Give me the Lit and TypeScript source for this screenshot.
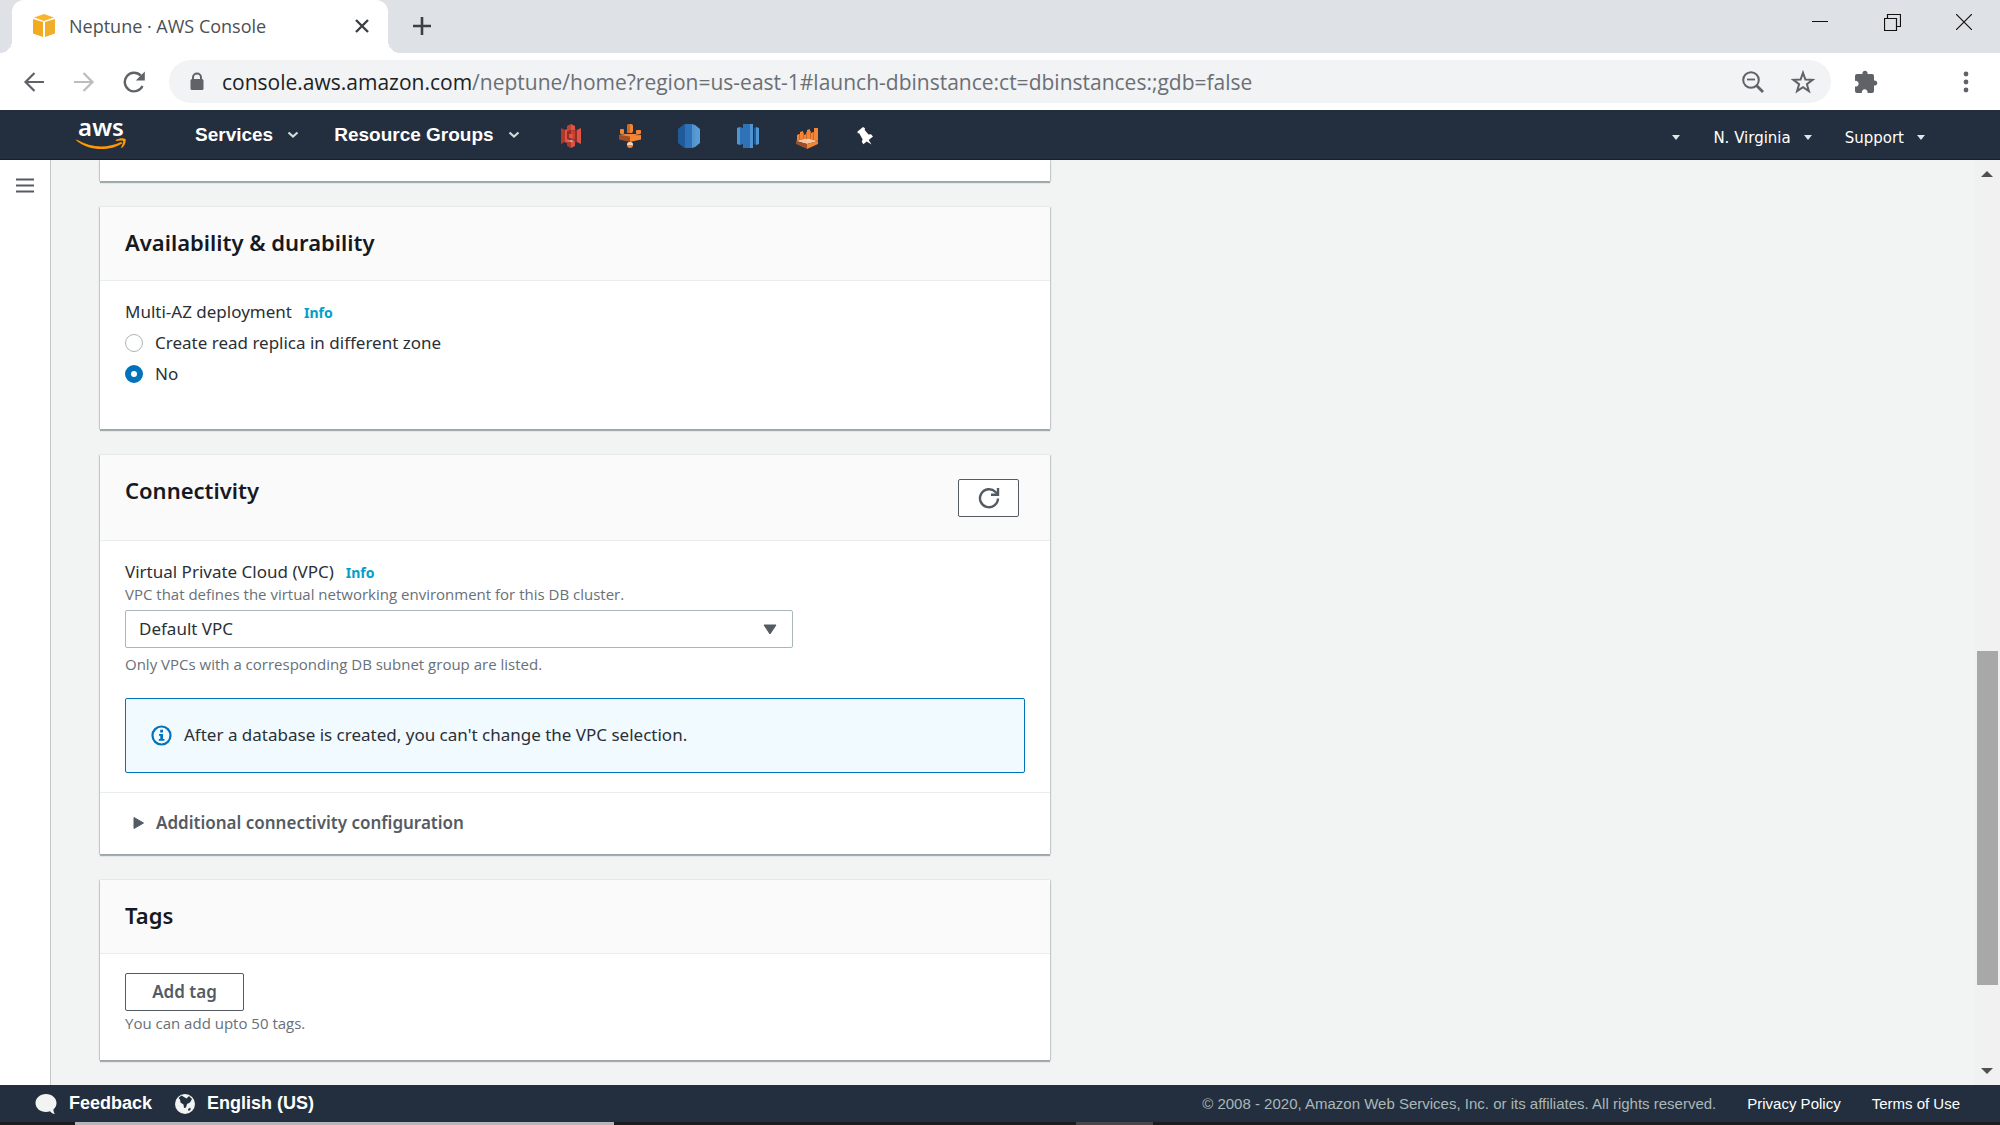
import { LitElement, html, css, svg } from "lit";
import { customElement, state } from "lit/decorators.js";

const caret = html`<svg class="caret" width="10" height="6" viewBox="0 0 10 6" aria-hidden="true"><path d="M1 0h8L5 5z" fill="#e2e4e6" /></svg>`;
const chevron = html`<svg class="chevron" width="12" height="8" viewBox="0 0 12 8" aria-hidden="true"><path d="M1.5 1.500 6 5.500l4.500-4" fill="none" stroke="#d5dbdb" stroke-width="2.200" /></svg>`;

const reloadIcon = html`<svg width="24" height="24" viewBox="0 0 24 24" aria-hidden="true">
  <path d="M20.500 16A9.300 9.300 0 1 1 18.800 5.600" fill="none" stroke="#5f6368" stroke-width="2.300" />
  <path d="M22.800 1.500v9h-9z" fill="#5f6368" />
</svg>`;

/* Service shortcuts pinned to the navigation bar. */
const shortcuts = [
  {
    name: "S3",
    art: svg`<path d="M2 5l4 2v12l-4 2z" fill="#b0392c"/><path d="M6 7l4-2v16l-4-2z" fill="#e05243"/>
      <path d="M22 5l-4 2v12l4 2z" fill="#e05243"/><path d="M18 7l-4-2v16l4-2z" fill="#8c3123"/>
      <path d="M12 1L8 3v4l4 1z" fill="#c9402f"/><path d="M12 1l4 2v4l-4 1z" fill="#e05243"/>
      <path d="M12 25l-4-2v-4l4-1z" fill="#b0392c"/><path d="M12 25l4-2v-4l-4-1z" fill="#e05243"/>
      <path d="M8 8l4-1v10l-4-1z" fill="#8c3123"/><path d="M16 8l-4-1v10l4-1z" fill="#c9402f"/>
      <path d="M10 11h4v4h-4z" fill="#e05243"/>
      <path d="M8 18l4 1 4-1-4-1z" fill="#f0a59d"/>`,
  },
  {
    name: "EMR",
    art: svg`<path d="M1 12l11 1v6L1 16.500z" fill="#9d5025"/><path d="M23 12l-11 1v6l11-2.500z" fill="#f58534"/>
      <path d="M1 12l6-1h10l6 1-11 1.500z" fill="#f58534"/><rect x="2" y="6" width="4" height="5" rx="1" fill="#f58534"/>
      <rect x="9" y="1" width="6" height="9" rx="2" fill="#f58534"/><path d="M9 3q1-2 3-2v9H9z" fill="#c96a28"/>
      <rect x="18" y="7" width="5" height="4" rx="1" fill="#f58534"/>
      <circle cx="12" cy="22" r="3" fill="#f58534"/><path d="M12 19a3 3 0 0 0-3 3h6a3 3 0 0 0-3-3z" fill="#f9d3b8"/>`,
  },
  {
    name: "RDS",
    art: svg`<path d="M1 6l5-4v22l-5-4z" fill="#205b99"/><path d="M6 2l3-1h6v24H9l-3-1z" fill="#2e73b8"/>
      <path d="M15 1l3 1v22l-3 1z" fill="#5294cf"/><path d="M18 2l5 4v14l-5 4z" fill="#5b9bd5"/><path d="M6 2l2-.7v23.400L6 24z" fill="#205b99"/>`,
  },
  {
    name: "Redshift",
    art: svg`<path d="M1 5l3-1v18l-3-1z" fill="#5294cf"/><path d="M4 4l3 1v16l-3 1z" fill="#2e73b8"/>
      <path d="M7 1h5v24H7z" fill="#2e73b8"/><path d="M12 1h5v24h-5z" fill="#5294cf"/><path d="M10 1h4v24h-4z" fill="#2e73b8"/>
      <path d="M18 5l2-1v18l-2-1z" fill="#205b99"/><path d="M20 4l3 1v16l-3 1z" fill="#5294cf"/>`,
  },
  {
    name: "QuickSight",
    art: svg`<path d="M1 18l11-3 11 3-11 3z" fill="#f7c6a3"/><path d="M1 18l11 3v5L1 21z" fill="#9d5025"/><path d="M23 18l-11 3v5l11-5z" fill="#f58534"/>
      <path d="M2 12l2-1v6l-2 1zM5 9l3-1v8l-3 1zM9 12l2-1v5H9zM12 7l3-1v10h-3zM16 10l2-1v8l-2-1zM19 5h4v13l-4-1z" fill="#f58534"/>
      <path d="M4 11h1v6H4zM8 9l1 1v6H8zM11 9h1v7h-1zM15 8h1v8h-1zM18 9h1v8h-1z" fill="#c96a28"/>`,
  },
];

@customElement("app-root")
export class AppRoot extends LitElement {
  @state() private deployment = "no";

  static styles = css`
    :host {
      display: flex;
      flex-direction: column;
      height: 100vh;
      background: #f2f3f3;
      color: #16191f;
      font-family: "Noto Sans", "Open Sans", sans-serif;
      font-size: 17px;
      overflow: hidden;
    }
    * { box-sizing: border-box; }
    svg { display: block; flex: none; }
    button, select, input { font: inherit; margin: 0; }
    button { border: 0; padding: 0; background: none; display: flex; align-items: center; justify-content: center; color: inherit; cursor: pointer; }
    a { color: inherit; text-decoration: none; }
    h2, p { margin: 0; }

    .tabs { display: flex; flex: none; height: 53px; background: #dee1e6; padding-left: 12px; align-items: stretch; font-family: "Open Sans", "Noto Sans", sans-serif; }
    .tab { position: relative; display: flex; align-items: center; gap: 13px; width: 376px; padding: 0 18px 2px 20px; background: #fff; border-radius: 12px 12px 0 0; color: #4b4f54; font-size: 18px; }
    .tab::before, .tab::after { content: ""; position: absolute; bottom: 0; width: 12px; height: 12px; }
    .tab::before { left: -12px; background: radial-gradient(circle at 0 0, transparent 12px, #fff 12px); }
    .tab::after { right: -12px; background: radial-gradient(circle at 100% 0, transparent 12px, #fff 12px); }
    .tab-title { flex: 1; }
    .new-tab { padding: 0 24px 2px; }
    .window { display: flex; margin-left: auto; padding-bottom: 9px; }
    .window button { width: 72px; }

    .toolbar { display: flex; flex: none; align-items: center; height: 57px; padding-right: 23px; padding-left: 22px; background: #fff; }
    .history { display: flex; gap: 26px; }
    .omnibox { display: flex; flex: 1; align-items: center; height: 43px; margin: 0 20px 0 23px; padding: 0 15px 0 20px; border-radius: 22px; background: #f1f3f4; }
    .url { display: flex; flex: 1; padding-left: 17px; color: #6b6f74; font-family: "Open Sans", "Noto Sans", sans-serif; font-size: 21px; white-space: nowrap; }
    .domain { color: #202124; }
    .omnibox-actions { display: flex; gap: 25px; }
    .menu { margin-left: 74px; }

    .nav { display: flex; flex: none; align-items: center; height: 50px; padding-right: 74px; padding-left: 76px; background: #232f3e; border-bottom: 1px solid #161e2d; color: #fff; }
    .logo { display: flex; flex-direction: column; gap: 2px; align-items: center; width: 50px; margin-right: 69px; padding-bottom: 2px; font-size: 24px; font-weight: 600; line-height: 18px; }
    .main-menu { display: flex; gap: 35px; font-family: "Liberation Sans", Arial, sans-serif; font-size: 19px; font-weight: 700; }
    .main-menu button { gap: 14px; }
    .shortcuts { display: flex; gap: 35px; align-items: center; margin-left: 39px; padding-top: 2px; }
    .account-menu { display: flex; gap: 32px; margin-left: auto; font-family: "DejaVu Sans", Verdana, sans-serif; font-size: 15px; }
    .account-menu button { gap: 12px; padding-top: 6px; }

    .workspace { display: flex; flex: 1; min-height: 0; }
    .rail { flex: none; width: 51px; padding: 17px 15px; background: #fff; border-right: 1px solid #c3c9cb; }
    .content { display: grid; flex: 1; grid-template-columns: minmax(0, 25fr) minmax(0, 23fr); padding: 0 50px 0 49px; overflow: hidden; }
    .cards { display: flex; flex-direction: column; gap: 26px; }
    .card { flex: none; background: #fff; box-shadow: 0 2px 1px 0 rgba(0, 28, 36, 0.32), 1px 0 1px 0 rgba(0, 28, 36, 0.15), -1px 0 1px 0 rgba(0, 28, 36, 0.15); }
    .card-end { height: 21px; }
    .card-head { display: flex; align-items: flex-start; justify-content: space-between; padding: 20px 25px 23px; background: #fafafa; border-bottom: 1px solid #eaeded; }
    .card-title { font-size: 22px; font-weight: 600; line-height: 30px; }
    .card-body { padding: 19px 25px; }
    .choices { display: flex; flex-direction: column; gap: 7px; padding: 19px 25px 43px; }
    .label { display: flex; align-items: baseline; gap: 12px; height: 24px; line-height: 24px; color: #2b2f36; }
    .info { color: #00a1c9; font-size: 14px; font-weight: 700; }
    .hint { color: #687078; font-family: "Open Sans", "Noto Sans", sans-serif; font-size: 15px; line-height: 20px; }
    .choice { display: flex; align-items: center; gap: 12px; line-height: 24px; color: #2b2f36; }
    .choice input { appearance: none; width: 18px; height: 18px; border: 1px solid #aab7b8; border-radius: 50%; background: #fff; }
    .choice input:checked { border: 6px solid #0073bb; }
    .outlined { height: 38px; padding-bottom: 2px; border: 1px solid #545b64; border-radius: 2px; background: #fff; color: #545b64; font-weight: 600; }
    .refresh { width: 61px; margin: 4px 6px 0 0; padding: 0; }
    .select-box { position: relative; max-width: 668px; margin: 6px 0; }
    .select { display: block; width: 100%; height: 38px; padding: 0 13px 2px; appearance: none; border: 1px solid #aab7b8; border-radius: 2px; background: #fff; color: #2b2f36; }
    .select-arrow { position: absolute; top: 14px; right: 16px; pointer-events: none; }
    .notice { display: flex; align-items: center; gap: 12px; height: 75px; margin-top: 24px; padding: 0 25px; border: 1px solid #0073bb; border-radius: 2px; background: #f1faff; color: #2b2f36; }
    .notice-text { padding-bottom: 2px; }
    .expander { border-top: 1px solid #eaeded; }
    .expander button { gap: 12px; height: 61px; padding: 0 33px 2px; color: #545b64; font-weight: 600; }
    .tags { padding-bottom: 27px; }
    .add-tag { width: 119px; margin-bottom: 2px; }

    .scrollbar { display: flex; flex: none; flex-direction: column; align-items: center; width: 26px; padding: 11px 0; background: #f1f1f1; }
    .before-thumb { flex: 470; }
    .thumb { flex: 332; width: 21px; background: #a8a8a8; }
    .after-thumb { flex: 82; }

    .footer { display: flex; flex: none; align-items: center; height: 37px; padding: 0 40px 0 34px; background: #232f3e; color: #fff; font-family: "Liberation Sans", Arial, sans-serif; font-size: 15px; }
    .footer-menu { display: flex; gap: 22px; font-size: 18px; font-weight: 700; }
    .footer-menu button { gap: 11px; }
    .legal { display: flex; gap: 31px; margin-left: auto; }
    .copyright { color: #aab7b8; }
    .desktop-edge { display: flex; flex: none; height: 3px; padding-left: 75px; background: #1c1b1e; }
    .edge-search { width: 28%; background: #b9b4b8; }
    .edge-task { width: 4%; margin-left: 24%; background: #4a4649; }
  `;

  private pick(e: Event) {
    this.deployment = (e.target as HTMLInputElement).value;
  }

  render() {
    return html`
      <div class="tabs">
        <div class="tab">
          <svg width="24" height="24" viewBox="0 0 24 24" aria-hidden="true">
            <path d="M12 0l10 3.500-10 3.500L2 3.500z" fill="#f9b62d" />
            <path d="M1 5l10 3v15L1 19.500z" fill="#f2ab20" />
            <path d="M23 5l-10 3v15l10-3.500z" fill="#f0ae2b" />
          </svg>
          <span class="tab-title">Neptune · AWS Console</span>
          <button aria-label="Close tab"><svg width="16" height="16" viewBox="0 0 16 16"><path d="M2 2l12 12M14 2L2 14" stroke="#3c4043" stroke-width="2.400" /></svg></button>
        </div>
        <button class="new-tab" aria-label="New tab"><svg width="20" height="20" viewBox="0 0 20 20"><path d="M10 1v18M1 10h18" stroke="#3c4043" stroke-width="2.600" /></svg></button>
        <div class="window">
          <button aria-label="Minimize"><svg width="16" height="16" viewBox="0 0 16 16"><path d="M0 7.500h16" stroke="#111" /></svg></button>
          <button aria-label="Restore"><svg width="17" height="17" viewBox="0 0 17 17"><path d="M.5 4.500h12v12H.5zM3.500 4.500v-4h13v12h-4" fill="none" stroke="#111" stroke-width="1.200" /></svg></button>
          <button aria-label="Close window"><svg width="16" height="16" viewBox="0 0 16 16"><path d="M0 0l16 16M16 0L0 16" stroke="#111" stroke-width="1.200" /></svg></button>
        </div>
      </div>

      <div class="toolbar">
        <div class="history">
          <button aria-label="Back"><svg width="24" height="24" viewBox="0 0 24 24"><path d="M22 12H4M12.500 3l-9 9 9 9" fill="none" stroke="#5f6368" stroke-width="2.200" /></svg></button>
          <button aria-label="Forward"><svg width="24" height="24" viewBox="0 0 24 24"><path d="M2 12h18M11.500 3l9 9-9 9" fill="none" stroke="#babcbe" stroke-width="2.200" /></svg></button>
          <button aria-label="Reload">${reloadIcon}</button>
        </div>
        <div class="omnibox">
          <svg width="16" height="20" viewBox="0 0 16 20" aria-hidden="true">
            <path d="M4 8V5.500a4 4 0 0 1 8 0V8" fill="none" stroke="#5f6368" stroke-width="2" />
            <rect x="1.500" y="7" width="13" height="11" rx="1.500" fill="#5f6368" />
          </svg>
          <span class="url"><span class="domain">console.aws.amazon.com</span><span>/neptune/home?region=us-east-1#launch-dbinstance:ct=dbinstances:;gdb=false</span></span>
          <div class="omnibox-actions">
            <button aria-label="Zoom"><svg width="24" height="24" viewBox="0 0 24 24"><circle cx="10" cy="10" r="7.800" fill="none" stroke="#5f6368" stroke-width="2" /><path d="M6 9.500h8" stroke="#5f6368" stroke-width="1.800" /><path d="M15.500 15.500l6.500 6.500" stroke="#5f6368" stroke-width="2.800" /></svg></button>
            <button aria-label="Bookmark"><svg width="26" height="26" viewBox="0 0 26 26"><path d="M13 3.800l2.400 6.700 7.200.3-5.700 4.400 2 6.900-5.900-4-5.900 4 2-6.900-5.700-4.400 7.200-.3z" fill="none" stroke="#5f6368" stroke-width="2" /></svg></button>
          </div>
        </div>
        <button aria-label="Extensions"><svg width="30" height="26" viewBox="0 0 30 26"><path d="M6 5h5.500a2.600 2.600 0 1 1 5 0H21a2 2 0 0 1 2 2v4.500a2.600 2.600 0 1 1 0 5V22a2 2 0 0 1-2 2h-4.500a2.900 2.900 0 1 0-5.600 0H6a2 2 0 0 1-2-2v-4.500a2.900 2.900 0 1 0 0-5.600V7a2 2 0 0 1 2-2z" fill="#5f6368" /></svg></button>
        <button class="menu" aria-label="Browser menu"><svg width="22" height="22" viewBox="0 0 22 22"><g fill="#5f6368"><circle cx="11" cy="3" r="2.400" /><circle cx="11" cy="11" r="2.400" /><circle cx="11" cy="19" r="2.400" /></g></svg></button>
      </div>

      <nav class="nav">
        <a class="logo" href="#">
          <span>aws</span>
          <svg width="50" height="12" viewBox="0 0 50 12" aria-hidden="true">
            <path d="M.5 1.500C15 10 31 10.500 45 4l1.500 1.200C34 13.500 13 13.500.2 2.500z" fill="#f90" />
            <path d="M39.500 2C43 .3 47.500-.3 49.500 1c.8 2-.5 6.500-3.500 9l-1-.5C46.500 6.500 47.500 4 47 3c-1-.8-4.500-.5-7 0z" fill="#f90" />
          </svg>
        </a>
        <div class="main-menu">
          <button>Services ${chevron}</button>
          <button>Resource Groups ${chevron}</button>
        </div>
        <div class="shortcuts">
          ${shortcuts.map((s) => html`<a href="#" aria-label=${s.name}><svg width="24" height="26" viewBox="0 0 24 26">${s.art}</svg></a>`)}
          <button aria-label="Edit shortcuts"><svg width="22" height="22" viewBox="0 0 22 22"><path d="M3.500 6.500L9 2l2 1.200-.3 1.800 3.800 4.500 2.500-.3 2 2.200-4.300 3.600 2.800 4.500-4.800-3-3.300 2.700-1.600-2.500.8-2.500L5 7.900l-1.300.6z" fill="#fff" /></svg></button>
        </div>
        <div class="account-menu">
          <button aria-label="Account">${caret}</button>
          <button>N. Virginia ${caret}</button>
          <button>Support ${caret}</button>
        </div>
      </nav>

      <div class="workspace">
        <aside class="rail">
          <button aria-label="Open navigation"><svg width="20" height="18" viewBox="0 0 20 18"><path d="M1 2.500h18M1 8.500h18M1 14.500h18" stroke="#545b64" stroke-width="2.200" /></svg></button>
        </aside>
        <main class="content">
          <div class="cards">
            <div class="card card-end"></div>

            <section class="card">
              <header class="card-head"><h2 class="card-title">Availability &amp; durability</h2></header>
              <div class="choices" role="radiogroup" aria-labelledby="az">
                <div class="label"><span id="az">Multi-AZ deployment</span><a class="info" href="#">Info</a></div>
                <label class="choice"><input type="radio" name="az" value="replica" .checked=${this.deployment === "replica"} @change=${this.pick} />Create read replica in different zone</label>
                <label class="choice"><input type="radio" name="az" value="no" .checked=${this.deployment === "no"} @change=${this.pick} />No</label>
              </div>
            </section>

            <section class="card">
              <header class="card-head">
                <h2 class="card-title">Connectivity</h2>
                <button class="outlined refresh" aria-label="Refresh"><svg width="22" height="22" viewBox="0 0 22 22"><path d="M20 11.500A9 9 0 1 1 17.500 5l2 2" fill="none" stroke="#545b64" stroke-width="2.400" /><path d="M20 1v6.800h-7" fill="none" stroke="#545b64" stroke-width="2.400" /></svg></button>
              </header>
              <div class="card-body">
                <div class="label"><label for="vpc">Virtual Private Cloud (VPC)</label><a class="info" href="#">Info</a></div>
                <p class="hint">VPC that defines the virtual networking environment for this DB cluster.</p>
                <div class="select-box">
                  <select class="select" id="vpc"><option>Default VPC</option></select>
                  <svg class="select-arrow" width="14" height="11" viewBox="0 0 14 11" aria-hidden="true"><path d="M1 1h12L7 10z" fill="#545b64" stroke="#545b64" stroke-linejoin="round" /></svg>
                </div>
                <p class="hint">Only VPCs with a corresponding DB subnet group are listed.</p>
                <div class="notice">
                  <svg width="21" height="21" viewBox="0 0 21 21" aria-hidden="true"><circle cx="10.500" cy="10.500" r="9" fill="none" stroke="#0073bb" stroke-width="2.200" /><path d="M9.200 4.800h2.800v2.600H9.200zM8 9h4v5h1.500v1.800H7.800V14h1.500v-3.200H8z" fill="#0073bb" /></svg>
                  <span class="notice-text">After a database is created, you can't change the VPC selection.</span>
                </div>
              </div>
              <div class="expander">
                <button aria-expanded="false"><svg width="11" height="14" viewBox="0 0 11 14" aria-hidden="true"><path d="M1 1.500v11L10.500 7z" fill="#545b64" stroke="#545b64" stroke-linejoin="round" /></svg>Additional connectivity configuration</button>
              </div>
            </section>

            <section class="card">
              <header class="card-head"><h2 class="card-title">Tags</h2></header>
              <div class="card-body tags">
                <button class="outlined add-tag">Add tag</button>
                <p class="hint">You can add upto 50 tags.</p>
              </div>
            </section>
          </div>
        </main>
        <div class="scrollbar" aria-hidden="true">
          <svg width="12" height="6" viewBox="0 0 12 6"><path d="M6 0l6 6H0z" fill="#505050" /></svg>
          <div class="before-thumb"></div>
          <div class="thumb"></div>
          <div class="after-thumb"></div>
          <svg width="12" height="6" viewBox="0 0 12 6"><path d="M6 6l6-6H0z" fill="#505050" /></svg>
        </div>
      </div>

      <footer class="footer">
        <div class="footer-menu">
          <button><svg width="24" height="22" viewBox="0 0 24 22" aria-hidden="true"><path d="M12 1C6 1 1.500 5 1.500 10S6 19 12 19c1.500 0 2.800-.2 4-.7 1.200 1.500 3 2.700 5 2.700-1.200-1.200-1.700-3-1.500-4.700C21.500 14.600 22.500 12.500 22.500 10c0-5-4.500-9-10.500-9z" fill="#f2f3f3" /></svg>Feedback</button>
          <button><svg width="22" height="22" viewBox="0 0 22 22" aria-hidden="true"><circle cx="11" cy="11" r="10" fill="#f2f3f3" /><path d="M4.500 5l3-2.500 2.500 1.500 2.500 1.500L15 3l3 3-2 3.500-3 1.500-1 3.500-2 .5-.5-3.500-3-2-.5-3zM14 16l2.500-1.500v2.500l-2 1z" fill="#232f3e" /></svg>English (US)</button>
        </div>
        <div class="legal">
          <span class="copyright">© 2008 - 2020, Amazon Web Services, Inc. or its affiliates. All rights reserved.</span>
          <a href="#">Privacy Policy</a>
          <a href="#">Terms of Use</a>
        </div>
      </footer>
      <div class="desktop-edge" aria-hidden="true"><div class="edge-search"></div><div class="edge-task"></div></div>
    `;
  }
}
